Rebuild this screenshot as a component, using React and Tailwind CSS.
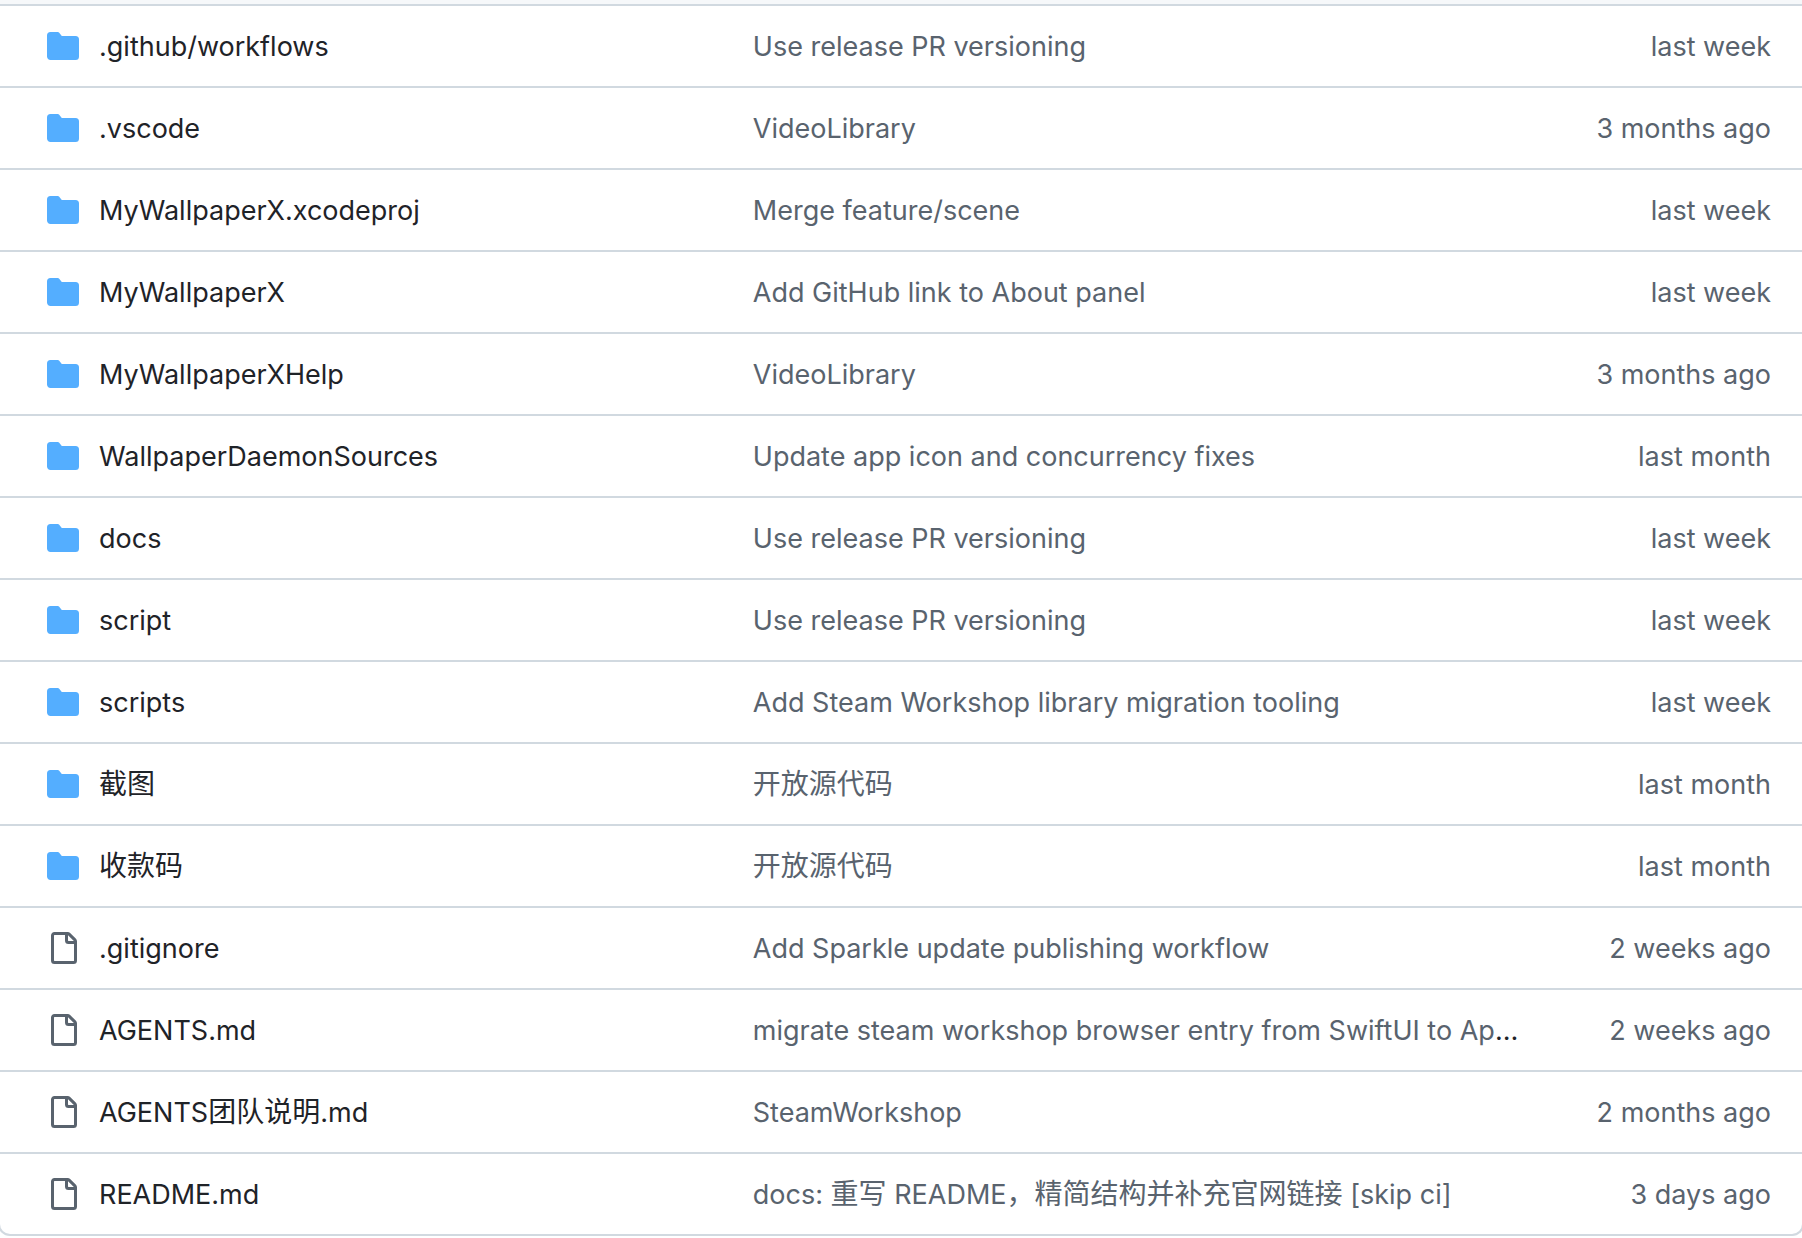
import React from "react";

const files = [
  { type: "dir", name: ".github/workflows", message: "Use release PR versioning", date: "last week" },
  { type: "dir", name: ".vscode", message: "VideoLibrary", date: "3 months ago" },
  { type: "dir", name: "MyWallpaperX.xcodeproj", message: "Merge feature/scene", date: "last week" },
  { type: "dir", name: "MyWallpaperX", message: "Add GitHub link to About panel", date: "last week" },
  { type: "dir", name: "MyWallpaperXHelp", message: "VideoLibrary", date: "3 months ago" },
  { type: "dir", name: "WallpaperDaemonSources", message: "Update app icon and concurrency fixes", date: "last month" },
  { type: "dir", name: "docs", message: "Use release PR versioning", date: "last week" },
  { type: "dir", name: "script", message: "Use release PR versioning", date: "last week" },
  { type: "dir", name: "scripts", message: "Add Steam Workshop library migration tooling", date: "last week" },
  { type: "dir", name: "截图", message: "开放源代码", date: "last month" },
  { type: "dir", name: "收款码", message: "开放源代码", date: "last month" },
  { type: "file", name: ".gitignore", message: "Add Sparkle update publishing workflow", date: "2 weeks ago" },
  { type: "file", name: "AGENTS.md", message: "migrate steam workshop browser entry from SwiftUI to AppKit", date: "2 weeks ago" },
  { type: "file", name: "AGENTS团队说明.md", message: "SteamWorkshop", date: "2 months ago" },
  { type: "file", name: "README.md", message: "docs: 重写 README，精简结构并补充官网链接 [skip ci]", date: "3 days ago" },
];

function FolderIcon() {
  return (
    <svg viewBox="0 0 16 16" className="mt-[3px] size-8 shrink-0 fill-[#54aeff]" aria-hidden="true">
      <path d="M1.75 1A1.75 1.75 0 0 0 0 2.75v10.5C0 14.216.784 15 1.75 15h12.5A1.75 1.75 0 0 0 16 13.25v-8.5A1.75 1.75 0 0 0 14.25 3H7.5a.25.25 0 0 1-.2-.1l-.9-1.2C6.07 1.26 5.55 1 5 1H1.75Z" />
    </svg>
  );
}

function FileIcon() {
  return (
    <svg viewBox="0 0 16 16" className="mt-[3px] size-8 shrink-0 fill-[#59636e]" aria-hidden="true">
      <path d="M2 1.75C2 .784 2.784 0 3.75 0h6.586c.464 0 .909.184 1.237.513l2.914 2.914c.329.328.513.773.513 1.237v9.586A1.75 1.75 0 0 1 13.25 16h-9.5A1.75 1.75 0 0 1 2 14.25Zm1.75-.25a.25.25 0 0 0-.25.25v12.5c0 .138.112.25.25.25h9.5a.25.25 0 0 0 .25-.25V6h-2.75A1.75 1.75 0 0 1 9 4.25V1.5Zm6.75.062V4.25c0 .138.112.25.25.25h2.688l-.011-.013-2.914-2.914-.013-.011Z" />
    </svg>
  );
}

// Chinese runs are set one size up from the latin text
function Label({ text }) {
  return text.split(/([\u4e00-\u9fff，]+)/).map((part, i) =>
    i % 2 === 1 ? (
      <span key={i} lang="zh-CN" className="text-[28px] leading-none">
        {part}
      </span>
    ) : (
      part
    )
  );
}

function FileRow({ file }) {
  return (
    <tr>
      <td className="border-t-2 border-[#d1d9e0] pt-[21px] pb-[19px] pl-[47px]">
        <div className="flex items-start gap-5">
          {file.type === "dir" ? <FolderIcon /> : <FileIcon />}
          <a href="#" className="truncate text-[#1f2328]">
            <Label text={file.name} />
          </a>
        </div>
      </td>
      <td className="border-t-2 border-[#d1d9e0] pt-[21px] pb-[19px] pl-8">
        <div className="truncate">
          <a href="#" className="text-[#59636e]">
            <Label text={file.message} />
          </a>
        </div>
      </td>
      <td className="border-t-2 border-[#d1d9e0] pt-[21px] pr-[31px] pb-[19px] text-right whitespace-nowrap text-[#59636e]">
        {file.date}
      </td>
    </tr>
  );
}

function App() {
  return (
    <div className="overflow-hidden bg-white font-['Inter','Noto_Sans_CJK_SC',sans-serif] text-[27px] leading-10 text-[#1f2328]">
      <div className="-mx-0.5 overflow-hidden rounded-b-xl border-x-2 border-b-2 border-[#d1d9e0]">
        <div className="h-1 bg-[#f6f8fa]" />
        <table className="w-full table-fixed border-separate border-spacing-0">
          <colgroup>
            <col className="w-[40%]" />
            <col />
            <col className="w-[276px]" />
          </colgroup>
          <tbody>
            {files.map((file) => (
              <FileRow key={file.name} file={file} />
            ))}
          </tbody>
        </table>
      </div>
    </div>
  );
}

export default App;
